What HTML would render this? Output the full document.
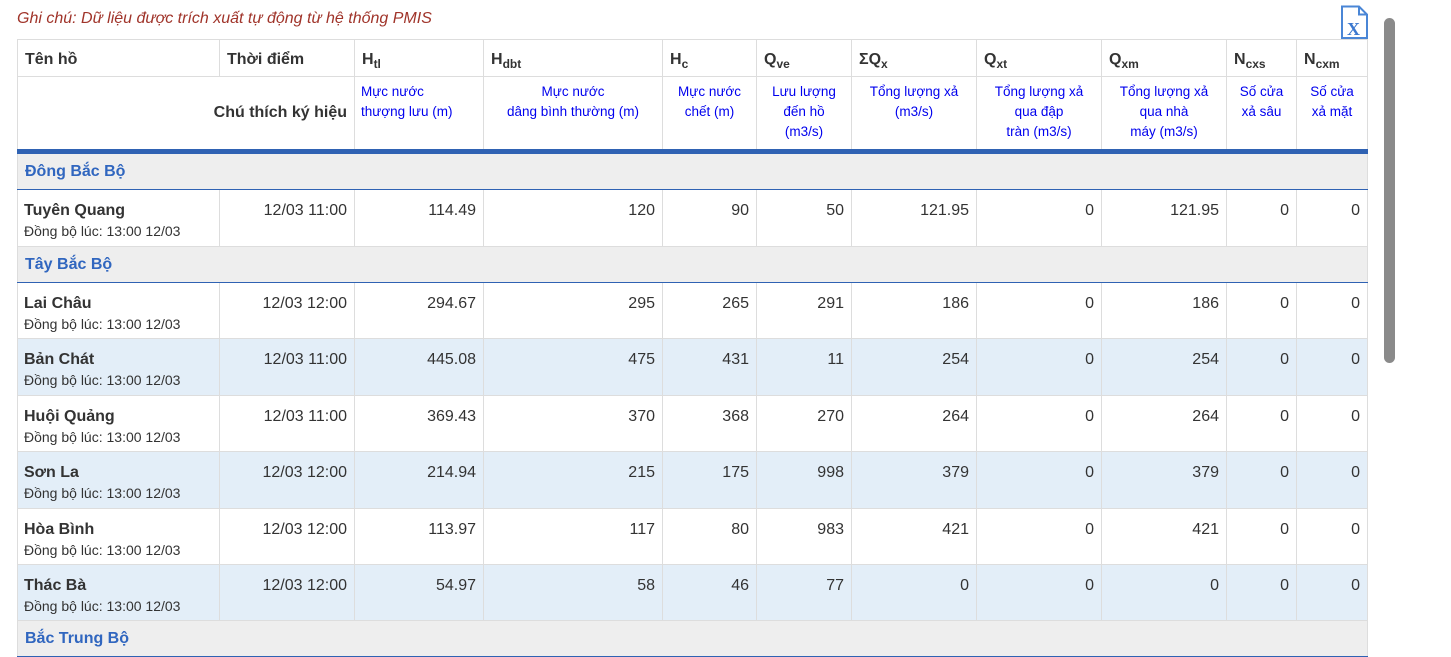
<!DOCTYPE html>
<html><head><meta charset="utf-8"><style>
body{margin:0;background:#fff;font-family:"Liberation Sans",Arial,sans-serif;color:#333;width:1451px;height:640px;overflow:hidden;position:relative}
.note{position:absolute;left:17px;top:10px;font-style:italic;color:#a0342a;font-size:16px}
table{position:absolute;left:17px;top:39px;border-collapse:collapse;table-layout:fixed;width:1351px}
td,th{border:1px solid #ddd;padding:0 7px;font-size:16px;vertical-align:top;overflow:hidden}
th{text-align:left;font-weight:bold;padding-top:11px;height:25px}
th sub{font-size:12px;vertical-align:-4px}
.h2 td{height:67px;text-align:center;color:#0000ee;font-size:13.5px;line-height:20px;padding-top:5px;padding-left:3px;padding-right:3px;border-bottom:5px solid #2f62b3}
.h2 td.lbl{text-align:right;color:#333;font-weight:bold;font-size:16px;vertical-align:middle;padding-top:0;padding-right:7px}
.g td{height:34px;background:#eee;color:#3066bf;font-weight:bold;vertical-align:middle;padding-top:1px;border-bottom:1px solid #2f62b3}
.r td{height:43px;padding-top:12px;text-align:right}
.r td.n{text-align:left;padding-left:6px;padding-top:10px;height:45px}
.r.t td{height:44px}
.r.t td.n{height:46px}
.r td.n b{display:block;font-size:16px;color:#333;line-height:21px}
.r td.n span{font-size:14px;line-height:20px}
.a td{background:#e3eef8}
.scroll{position:absolute;left:1384px;top:18px;width:11px;height:345px;background:#8a8a8a;border-radius:6px}
.x{position:absolute;left:1340px;top:5px}
</style></head><body>
<div class="note">Ghi chú: Dữ liệu được trích xuất tự động từ hệ thống PMIS</div>
<svg class="x" width="29" height="35" viewBox="0 0 29 35"><path d="M2 1.5H19L27 9.5V33H2Z" fill="#fff" stroke="#4a86d6" stroke-width="2"/><path d="M19 1.5V9.5H27" fill="none" stroke="#4a86d6" stroke-width="2"/><text x="7" y="30" font-family="Liberation Serif,serif" font-weight="bold" font-size="18" fill="#3b78cf">X</text></svg>
<div class="scroll"></div>
<table>
<colgroup><col style="width:202px"><col style="width:135px"><col style="width:129px"><col style="width:179px"><col style="width:94px"><col style="width:95px"><col style="width:125px"><col style="width:125px"><col style="width:125px"><col style="width:70px"><col style="width:71px"></colgroup>
<tr><th>Tên hồ</th><th>Thời điểm</th><th>H<sub>tl</sub></th><th>H<sub>dbt</sub></th><th>H<sub>c</sub></th><th>Q<sub>ve</sub></th><th>ΣQ<sub>x</sub></th><th>Q<sub>xt</sub></th><th>Q<sub>xm</sub></th><th>N<sub>cxs</sub></th><th>N<sub>cxm</sub></th></tr>
<tr class="h2"><td class="lbl" colspan="2">Chú thích ký hiệu</td><td style="text-align:left;padding-left:6px">Mực nước<br>thượng lưu (m)</td><td>Mực nước<br>dâng bình thường (m)</td><td>Mực nước<br>chết (m)</td><td>Lưu lượng<br>đến hồ<br>(m3/s)</td><td>Tổng lượng xả<br>(m3/s)</td><td>Tổng lượng xả<br>qua đập<br>tràn (m3/s)</td><td>Tổng lượng xả<br>qua nhà<br>máy (m3/s)</td><td>Số cửa<br>xả sâu</td><td>Số cửa<br>xả mặt</td></tr>
<tr class="g"><td colspan="11">Đông Bắc Bộ</td></tr>
<tr class="r t"><td class="n"><b>Tuyên Quang</b><span>Đồng bộ lúc: 13:00 12/03</span></td><td>12/03 11:00</td><td>114.49</td><td>120</td><td>90</td><td>50</td><td>121.95</td><td>0</td><td>121.95</td><td>0</td><td>0</td></tr>
<tr class="g"><td colspan="11">Tây Bắc Bộ</td></tr>
<tr class="r"><td class="n"><b>Lai Châu</b><span>Đồng bộ lúc: 13:00 12/03</span></td><td>12/03 12:00</td><td>294.67</td><td>295</td><td>265</td><td>291</td><td>186</td><td>0</td><td>186</td><td>0</td><td>0</td></tr>
<tr class="r a t"><td class="n"><b>Bản Chát</b><span>Đồng bộ lúc: 13:00 12/03</span></td><td>12/03 11:00</td><td>445.08</td><td>475</td><td>431</td><td>11</td><td>254</td><td>0</td><td>254</td><td>0</td><td>0</td></tr>
<tr class="r"><td class="n"><b>Huội Quảng</b><span>Đồng bộ lúc: 13:00 12/03</span></td><td>12/03 11:00</td><td>369.43</td><td>370</td><td>368</td><td>270</td><td>264</td><td>0</td><td>264</td><td>0</td><td>0</td></tr>
<tr class="r a t"><td class="n"><b>Sơn La</b><span>Đồng bộ lúc: 13:00 12/03</span></td><td>12/03 12:00</td><td>214.94</td><td>215</td><td>175</td><td>998</td><td>379</td><td>0</td><td>379</td><td>0</td><td>0</td></tr>
<tr class="r"><td class="n"><b>Hòa Bình</b><span>Đồng bộ lúc: 13:00 12/03</span></td><td>12/03 12:00</td><td>113.97</td><td>117</td><td>80</td><td>983</td><td>421</td><td>0</td><td>421</td><td>0</td><td>0</td></tr>
<tr class="r a"><td class="n"><b>Thác Bà</b><span>Đồng bộ lúc: 13:00 12/03</span></td><td>12/03 12:00</td><td>54.97</td><td>58</td><td>46</td><td>77</td><td>0</td><td>0</td><td>0</td><td>0</td><td>0</td></tr>
<tr class="g"><td colspan="11">Bắc Trung Bộ</td></tr>
</table>
</body></html>
